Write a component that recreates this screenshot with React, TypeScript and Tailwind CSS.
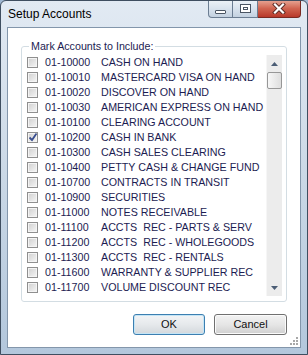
import React from 'react';

const accounts: { code: string; name: string; checked?: boolean }[] = [
  { code: '01-10000', name: 'CASH ON HAND' },
  { code: '01-10010', name: 'MASTERCARD VISA ON HAND' },
  { code: '01-10020', name: 'DISCOVER ON HAND' },
  { code: '01-10030', name: 'AMERICAN EXPRESS ON HAND' },
  { code: '01-10100', name: 'CLEARING ACCOUNT' },
  { code: '01-10200', name: 'CASH IN BANK', checked: true },
  { code: '01-10300', name: 'CASH SALES CLEARING' },
  { code: '01-10400', name: 'PETTY CASH & CHANGE FUND' },
  { code: '01-10700', name: 'CONTRACTS IN TRANSIT' },
  { code: '01-10900', name: 'SECURITIES' },
  { code: '01-11000', name: 'NOTES RECEIVABLE' },
  { code: '01-11100', name: 'ACCTS  REC - PARTS & SERV' },
  { code: '01-11200', name: 'ACCTS  REC - WHOLEGOODS' },
  { code: '01-11300', name: 'ACCTS  REC - RENTALS' },
  { code: '01-11600', name: 'WARRANTY & SUPPLIER REC' },
  { code: '01-11700', name: 'VOLUME DISCOUNT REC' },
];

const CheckBox = ({ checked }: { checked?: boolean }) => (
  <span className="relative w-[11px] h-[11px] shrink-0 border border-[#8f8f8f] bg-gradient-to-br from-[#cfcfcf] to-[#f6f6f6] shadow-[inset_0_0_0_1px_#f4f4f4]">
    {checked && (
      <svg className="absolute left-[-1px] top-[-2px]" width="12" height="12" viewBox="0 0 12 12">
        <path d="M2.5 6.5 L5 9 L9.5 2.5" fill="none" stroke="#3a4f8f" strokeWidth="1.8" />
      </svg>
    )}
  </span>
);

const TitleButtons = () => (
  <div className="ml-auto mr-[6px] flex h-[18px] mt-[-1px]">
    <div className="w-[25px] h-full flex items-end justify-center pb-[3px] border border-t-0 border-[#6b7d92] rounded-bl-[4px] bg-gradient-to-b from-[#eef3f8] via-[#d9e3ee] to-[#c3d1e0]">
      <span className="w-[11px] h-[4px] border border-[#4a5563] bg-white rounded-[1px]" />
    </div>
    <div className="w-[25px] h-full flex items-center justify-center border border-t-0 border-l-0 border-[#6b7d92] bg-gradient-to-b from-[#eef3f8] via-[#d9e3ee] to-[#c3d1e0]">
      <span className="w-[11px] h-[9px] border border-[#4a5563] bg-white flex items-center justify-center">
        <span className="w-[5px] h-[3px] border border-[#4a5563] bg-white" />
      </span>
    </div>
    <div className="w-[43px] h-full flex items-center justify-center border border-t-0 border-l-0 border-[#7a2a22] rounded-br-[4px] bg-gradient-to-b from-[#e7a898] via-[#d06450] to-[#b8382a]">
      <svg width="14" height="11" viewBox="0 0 14 11">
        <path d="M3 1.5 L11 9.5 M11 1.5 L3 9.5" stroke="#5b2a24" strokeWidth="4" strokeLinecap="square" />
        <path d="M3 1.5 L11 9.5 M11 1.5 L3 9.5" stroke="#ffffff" strokeWidth="2.2" strokeLinecap="square" />
      </svg>
    </div>
  </div>
);

const ScrollArrow = ({ up }: { up?: boolean }) => (
  <div className="h-[17px] flex items-center justify-center">
    <svg width="7" height="4" viewBox="0 0 7 4">
      <path d={up ? 'M0 4 L3.5 0 L7 4 Z' : 'M0 0 L3.5 4 L7 0 Z'} fill="#4b5d75" />
    </svg>
  </div>
);

const ResizeGrip = () => (
  <div className="absolute right-[2px] bottom-[2px] grid grid-cols-3 gap-[1px]">
    {[0, 0, 1, 0, 1, 1, 1, 1, 1].map((on, i) => (
      <span key={i} className={on ? 'w-[2px] h-[2px] bg-[#a8a8a8]' : 'w-[2px] h-[2px]'} />
    ))}
  </div>
);

export default function App() {
  return (
    <div className="w-[308px] h-[355px] font-['Liberation_Sans',Arial,sans-serif] bg-[#9fb7d2]">
      <div className="w-full h-full flex flex-col border border-[#3f4e60] rounded-t-[6px] bg-gradient-to-b from-[#e2eaf3] via-[#cad8e6] to-[#b3c7dc] overflow-hidden">
        {/* Title bar */}
        <div className="h-[26px] flex items-start">
          <span className="pl-[7px] pt-[6px] text-[12px] leading-[14px] text-black">Setup Accounts</span>
          <TitleButtons />
        </div>

        {/* Client area */}
        <div className="relative mx-[6px] mb-[6px] h-[321px] border border-[#8396ab] bg-white flex flex-col">
          <fieldset className="mt-[12px] mx-[13px] border border-[#d3dde3] rounded-[3px] pl-[2px] pr-[4px] pb-[5px]">
            <legend className="ml-[5px] px-[2px] text-[10.7px] leading-[12px] text-[#1c1c52]">
              Mark Accounts to Include:
            </legend>
            <div className="mt-[3px] h-[241px] flex">
              <div className="flex-1 flex flex-col">
                {accounts.map((a) => (
                  <div key={a.code} className="h-[15px] flex items-center pl-[3px] text-[10.7px] text-[#1c1c52] whitespace-pre">
                    <CheckBox checked={a.checked} />
                    <span className="ml-[7px] w-[56px]">{a.code}</span>
                    <span>{a.name}</span>
                  </div>
                ))}
              </div>
              <div className="w-[16px] flex flex-col bg-[#ececec] border-l border-[#f6f6f6]">
                <ScrollArrow up />
                <div className="h-[17px] border border-[#979797] rounded-[2px] bg-gradient-to-r from-[#f7f7f7] to-[#dedede]" />
                <div className="flex-1" />
                <ScrollArrow />
              </div>
            </div>
          </fieldset>

          <div className="mt-[12px] mr-[13px] flex justify-end gap-[9px]">
            <button className="w-[72px] h-[21px] rounded-[3px] border border-[#3c7fb1] bg-gradient-to-b from-[#f2f4f6] via-[#e6e9ec] to-[#d3d8dc] shadow-[inset_0_0_0_1px_#c4e5f6] text-[11px] text-[#111]">
              OK
            </button>
            <button className="w-[73px] h-[21px] rounded-[3px] border border-[#707070] bg-gradient-to-b from-[#f2f2f2] via-[#e6e6e6] to-[#d0d0d0] shadow-[inset_0_0_0_1px_#fbfbfb] text-[11px] text-[#111]">
              Cancel
            </button>
          </div>
          <ResizeGrip />
        </div>
      </div>
    </div>
  );
}
